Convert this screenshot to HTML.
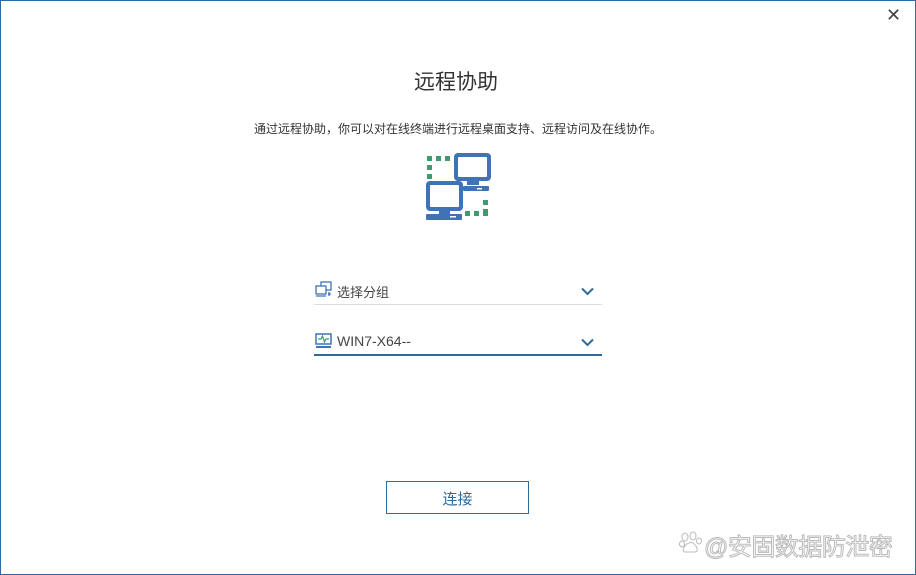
<!DOCTYPE html>
<html><head><meta charset="utf-8"><style>
html,body{margin:0;padding:0;}
body{width:916px;height:575px;position:relative;background:#fff;font-family:"Liberation Sans","Noto Sans CJK SC",sans-serif;overflow:hidden;}
.frame{position:absolute;left:0;top:0;width:914px;height:573px;border:1px solid #2b6aa3;}
.t{position:absolute;white-space:nowrap;}
</style></head><body>
<div class="frame"></div>
<div class="t" style="left:886px;top:5px;font-size:18px;color:#444;">✕</div>
<div class="t" style="left:-2px;width:916px;text-align:center;top:66px;font-size:21px;color:#333;">远程协助</div>
<div class="t" style="left:0;width:916px;text-align:center;top:120px;font-size:12px;color:#333;">通过远程协助，你可以对在线终端进行远程桌面支持、远程访问及在线协作。</div>
<svg style="position:absolute;left:420px;top:150px" width="80" height="75" viewBox="0 0 80 75">
<g fill="#3f9a6f">
<rect x="7" y="6" width="5" height="5"/><rect x="16" y="6" width="5" height="5"/><rect x="25" y="6" width="5" height="5"/>
<rect x="7" y="15" width="5" height="5"/><rect x="7" y="24" width="5" height="5"/>
<rect x="63" y="50" width="5" height="5"/><rect x="63" y="59" width="5" height="5"/>
<rect x="45" y="61" width="5" height="5"/><rect x="54" y="61" width="5" height="5"/><rect x="63" y="61" width="5" height="5"/>
</g>
<g fill="#3f73b5">
<rect x="34" y="3" width="37" height="28" rx="4"/>
<rect x="47" y="30" width="12" height="5"/>
<rect x="43" y="36" width="26" height="5" rx="1"/>
<rect x="6" y="31" width="37" height="30" rx="4"/>
<rect x="19" y="60" width="11" height="5"/>
<rect x="6" y="64" width="36" height="6" rx="1"/>
</g>
<g fill="#fff">
<rect x="38" y="7" width="29" height="20" rx="1"/>
<rect x="10" y="35" width="29" height="22" rx="1"/>
<rect x="57" y="38" width="5" height="1.5"/><rect x="30" y="66" width="6" height="1.5"/>
</g>
</svg>
<svg style="position:absolute;left:315px;top:281px" width="18" height="17" viewBox="0 0 18 17" fill="none" stroke="#3f73b5" stroke-width="1.3">
<rect x="6" y="1" width="10" height="8"/><rect x="1" y="5" width="10" height="8" fill="#fff"/><path d="M1 15h10M14 11v4M13 13h3"/>
</svg>
<div class="t" style="left:337px;top:282px;font-size:13px;color:#444;">选择分组</div>
<svg style="position:absolute;left:581px;top:287px" width="13" height="9" viewBox="0 0 13 9"><path d="M1 1.5l5.5 5.5 5.5-5.5" fill="none" stroke="#2e6a9a" stroke-width="2"/></svg>
<div style="position:absolute;left:314px;top:304px;width:288px;height:1px;background:#ddd;"></div>
<svg style="position:absolute;left:315px;top:333px" width="17" height="16" viewBox="0 0 17 16">
<rect x="1" y="1" width="15" height="10" fill="none" stroke="#3f73b5" stroke-width="1.5"/><path d="M3 6h3l1.5-3 2 6 1.5-3h3" fill="none" stroke="#3f9a6f" stroke-width="1.2"/><rect x="1" y="13" width="15" height="2" fill="#3f73b5"/>
</svg>
<div class="t" style="left:337px;top:333px;font-size:14px;color:#444;">WIN7-X64--</div>
<svg style="position:absolute;left:581px;top:338px" width="13" height="9" viewBox="0 0 13 9"><path d="M1 1.5l5.5 5.5 5.5-5.5" fill="none" stroke="#2e6a9a" stroke-width="2"/></svg>
<div style="position:absolute;left:314px;top:354px;width:288px;height:2px;background:#2e6a9a;"></div>
<div style="position:absolute;left:386px;top:481px;width:143px;height:33px;border:1px solid #2e6a9a;box-sizing:border-box;"></div>
<div class="t" style="left:386px;width:143px;text-align:center;top:488px;font-size:15px;color:#2e6a9a;">连接</div>
<svg style="position:absolute;left:679px;top:531px" width="24" height="24" viewBox="0 0 24 24" fill="#fff" stroke="#bbb" stroke-width="1">
<ellipse cx="6" cy="6" rx="3" ry="4"/><ellipse cx="14" cy="5" rx="3" ry="4"/><ellipse cx="20" cy="10" rx="2.5" ry="3"/><ellipse cx="3" cy="13" rx="2.5" ry="3"/><path d="M6 21c-3 0-2-5 2-8 3-2 6-2 8 1 3 3 3 7 0 7z"/>
</svg>
<div class="t" style="left:704px;top:527px;font-size:24px;color:#fff;-webkit-text-stroke:1px #bbb;letter-spacing:-0.5px;">@安固数据防泄密</div>
</body></html>
